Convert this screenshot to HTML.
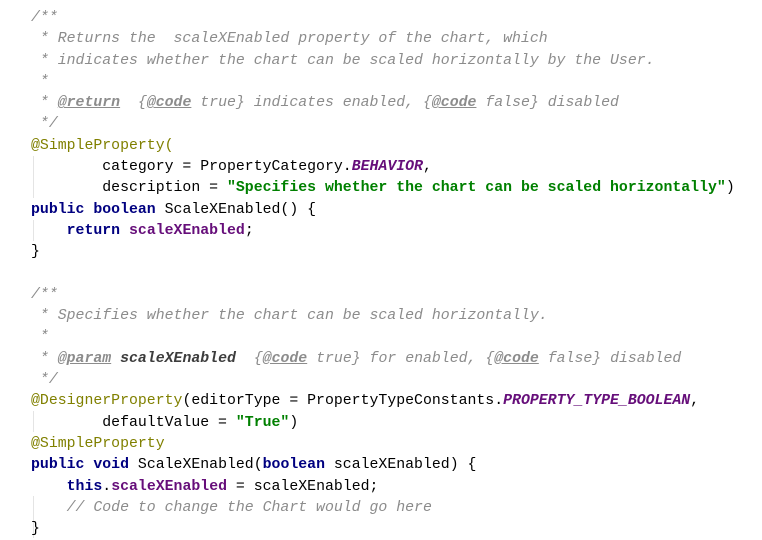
<!DOCTYPE html>
<html><head><meta charset="utf-8"><style>
body{margin:0;background:#fff;width:762px;height:539px;overflow:hidden}
pre{margin:0;position:absolute;left:31px;top:8px;font-family:"Liberation Mono","Courier New",monospace;font-size:14.85px;line-height:21.3px;color:#000}
.c{color:#8c8c8c;font-style:italic}
.t{color:#8c8c8c;font-style:italic;font-weight:bold;text-decoration:underline}
.p{color:#3d3d3d;font-style:italic;font-weight:bold}
.a{color:#808000}
.k{color:#000080;font-weight:bold}
.s{color:#008000;font-weight:bold}
.f{color:#660e7a;font-weight:bold}
.i{color:#660e7a;font-style:italic;font-weight:bold}
.g{position:absolute;left:33px;width:1px;background:#e4e4e4}
</style></head><body>
<div class="g" style="top:156px;height:42px"></div>
<div class="g" style="top:220px;height:21px"></div>
<div class="g" style="top:411px;height:21px"></div>
<div class="g" style="top:496px;height:42px"></div>
<pre><span class="c">/**
 * Returns the  scaleXEnabled property of the chart, which
 * indicates whether the chart can be scaled horizontally by the User.
 *
 * <span class="t">@return</span>  {<span class="t">@code</span> true} indicates enabled, {<span class="t">@code</span> false} disabled
 */</span>
<span class="a">@SimpleProperty(</span>
        category = PropertyCategory.<span class="i">BEHAVIOR</span>,
        description = <span class="s">"Specifies whether the chart can be scaled horizontally"</span>)
<span class="k">public boolean</span> ScaleXEnabled() {
    <span class="k">return</span> <span class="f">scaleXEnabled</span>;
}

<span class="c">/**
 * Specifies whether the chart can be scaled horizontally.
 *
 * <span class="t">@param</span> <span class="p">scaleXEnabled</span>  {<span class="t">@code</span> true} for enabled, {<span class="t">@code</span> false} disabled
 */</span>
<span class="a">@DesignerProperty</span>(editorType = PropertyTypeConstants.<span class="i">PROPERTY_TYPE_BOOLEAN</span>,
        defaultValue = <span class="s">"True"</span>)
<span class="a">@SimpleProperty</span>
<span class="k">public void</span> ScaleXEnabled(<span class="k">boolean</span> scaleXEnabled) {
    <span class="k">this</span>.<span class="f">scaleXEnabled</span> = scaleXEnabled;
    <span class="c">// Code to change the Chart would go here</span>
}</pre>
</body></html>
